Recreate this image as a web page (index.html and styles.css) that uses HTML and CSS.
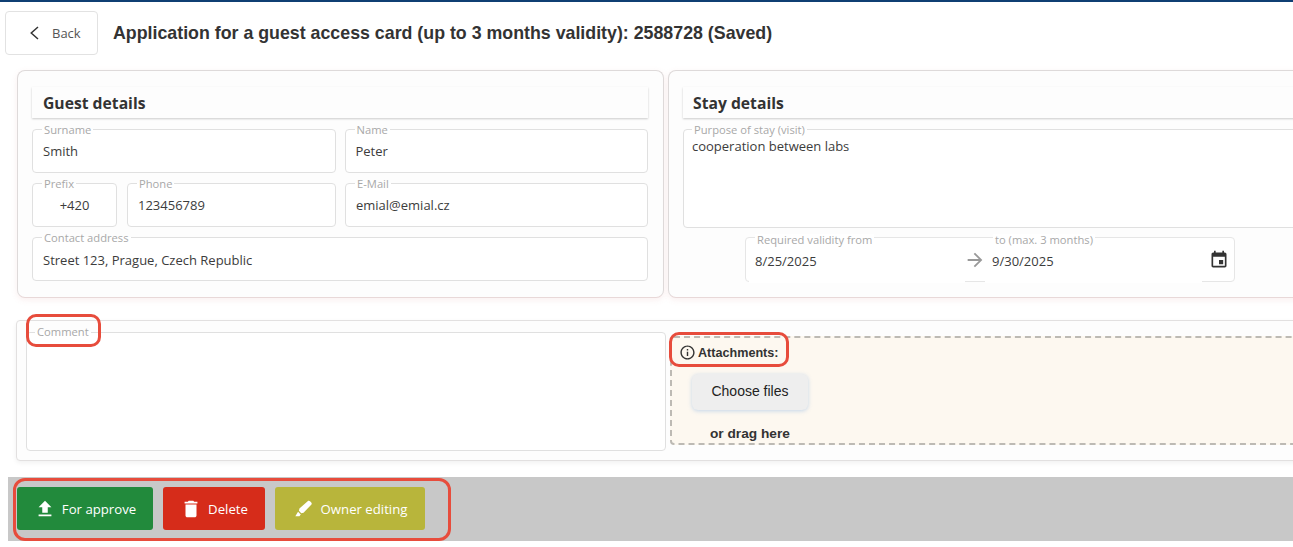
FILE: index.html
```html
<!DOCTYPE html>
<html lang="en">
<head>
  <meta charset="UTF-8">
  <meta name="viewport" content="width=device-width, initial-scale=1.0">
  <title>Guest access card</title>
  <link rel="stylesheet" href="styles.css">
</head>
<body>

  <div class="page">

    <div class="header">
      <button class="back-btn">
        <svg class="back-icon" viewBox="0 0 24 24"><path d="M16 4l-9 8 9 8" fill="none" stroke="#333" stroke-width="2"/></svg>
        Back
      </button>
      <h1>Application for a guest access card (up to 3 months validity): 2588728 (Saved)</h1>
    </div>

    <div class="cards">

      <div class="card">
        <h2>Guest details</h2>
        <div class="row">
          <fieldset class="field half"><legend>Surname</legend>Smith</fieldset>
          <fieldset class="field half"><legend>Name</legend>Peter</fieldset>
        </div>
        <div class="row">
          <div class="phone-group">
            <fieldset class="field prefix"><legend>Prefix</legend>+420</fieldset>
            <fieldset class="field phone"><legend>Phone</legend>123456789</fieldset>
          </div>
          <fieldset class="field half"><legend>E-Mail</legend>emial@emial.cz</fieldset>
        </div>
        <div class="row">
          <fieldset class="field wide"><legend>Contact address</legend>Street 123, Prague, Czech Republic</fieldset>
        </div>
      </div>

      <div class="card stay">
        <h2>Stay details</h2>
        <fieldset class="field purpose"><legend>Purpose of stay (visit)</legend>cooperation between labs</fieldset>
        <div class="dates">
          <div class="date-box">
            <span class="date-label label-from">Required validity from</span>
            <span class="date-label label-to">to (max. 3 months)</span>
            <div class="date-input date-from">8/25/2025</div>
            <svg class="arrow-icon" viewBox="0 0 24 24"><path d="M12 4l-1.41 1.41L16.17 11H4v2h12.17l-5.58 5.59L12 20l8-8z" fill="#999"/></svg>
            <div class="date-input date-to">9/30/2025</div>
            <svg class="cal-icon" viewBox="0 0 24 24"><path d="M17 12h-5v5h5v-5zM16 1v2H8V1H6v2H5c-1.11 0-1.99.9-1.99 2L3 19c0 1.1.89 2 2 2h14c1.1 0 2-.9 2-2V5c0-1.1-.9-2-2-2h-1V1h-2zm3 18H5V8h14v11z" fill="#333"/></svg>
          </div>
        </div>
      </div>

    </div>

    <div class="lower">
      <fieldset class="field comment"><legend>Comment</legend></fieldset>
      <div class="dropzone">
        <div class="attach-title">
          <svg class="info-icon" viewBox="0 0 24 24"><path d="M11 7h2v2h-2zm0 4h2v6h-2zm1-9C6.48 2 2 6.48 2 12s4.48 10 10 10 10-4.48 10-10S17.52 2 12 2zm0 18c-4.41 0-8-3.59-8-8s3.59-8 8-8 8 3.59 8 8-3.59 8-8 8z" fill="#333"/></svg>
          Attachments:
        </div>
        <button class="choose-btn">Choose files</button>
        <div class="drag-text">or drag here</div>
      </div>
    </div>

    <div class="actions">
      <button class="action green">
        <svg viewBox="0 0 24 24"><path d="M5 20h14v-2H5v2zm0-10h4v6h6v-6h4l-7-7-7 7z" fill="#fff"/></svg>
        For approve
      </button>
      <button class="action red">
        <svg viewBox="0 0 24 24"><path d="M6 19c0 1.1.9 2 2 2h8c1.100 0 2-.9 2-2V7H6v12zM19 4h-3.500l-1-1h-5l-1 1H5v2h14V4z" fill="#fff"/></svg>
        Delete
      </button>
      <button class="action olive">
        <svg viewBox="0 0 24 24"><path d="M16 3.500c.8-.7 1.900-.6 2.600.1l1.300 1.300c.7.7.7 1.800 0 2.500L11.500 16 9 16.500 6.500 14l.5-2.500zM5.500 15l3 3-1.500 2H2.500z" fill="#fff"/></svg>
        Owner editing
      </button>
    </div>

    <!-- red marks drawn over the screenshot -->
    <div class="mark mark-comment"></div>
    <div class="mark mark-attach"></div>
    <div class="mark mark-actions"></div>

  </div>

</body>
</html>
```

FILE: styles.css
```css
html, body {
  margin: 0;
  padding: 0;
  height: 100%;
  overflow: hidden;
}

body {
  font-family: "Open Sans", "Noto Sans", Arial, sans-serif;
  background: #fff;
  color: #3c3c3c;
}

.page {
  position: relative;
  width: 1293px;
  height: 547px;
  overflow: hidden;
  border-top: 2px solid #0f3f73;
  box-sizing: border-box;
}

/* header */
.header {
  display: flex;
  align-items: center;
  padding: 9px 0 0 5px;
  height: 44px;
}

.back-btn {
  display: flex;
  align-items: center;
  width: 93px;
  height: 44px;
  padding: 0 0 0 20px;
  background: #fff;
  border: 1px solid #e2e2e2;
  border-radius: 4px;
  font-family: inherit;
  font-size: 13px;
  color: #555;
}

.back-icon {
  width: 18px;
  height: 18px;
  margin-right: 8px;
}

h1 {
  margin: 0 0 0 15px;
  font-family: "Liberation Sans", Arial, sans-serif;
  font-size: 17.8px;
  font-weight: bold;
  color: #333;
}

/* cards */
.cards {
  display: flex;
  gap: 4px;
  margin: 15px 0 0 17px;
  width: 1320px;
}

.card {
  flex: 0 0 647px;
  height: 228px;
  box-sizing: border-box;
  padding: 16px 15px 0 14px;
  background: #fdfdfd;
  border: 1px solid #dedada;
  border-bottom-color: #e8d8d8;
  border-radius: 8px;
  box-shadow: 0 2px 6px rgba(210, 120, 120, 0.12);
}

h2 {
  margin: 0 0 5px;
  height: 31px;
  padding-left: 11px;
  line-height: 32px;
  font-size: 15.7px;
  font-weight: 700;
  color: #333;
  box-sizing: border-box;
  box-shadow: 0 1px 2px rgba(0, 0, 0, 0.2);
}

.stay h2 {
  padding-left: 10px;
}

.row {
  display: flex;
  gap: 9px;
  margin-bottom: 4px;
}

.field {
  margin: 0;
  padding: 6px 0 0 10px;
  min-width: 0;
  height: 50px;
  box-sizing: border-box;
  background: #fff;
  border: 1px solid #e0e0e0;
  border-radius: 4px;
  font-size: 13px;
  line-height: 20px;
  color: #3c3c3c;
}

.field legend {
  position: relative;
  top: 1px;
  margin-left: -1px;
  padding: 0 2px;
  font-size: 11.2px;
  line-height: 12px;
  color: #a8a8a8;
}

.half {
  flex: 1 1 50%;
  min-width: 0;
}

.wide {
  flex: 1;
  padding-top: 7px;
}

.phone-group {
  display: flex;
  flex: 0 0 304px;
  gap: 10px;
}

.prefix {
  flex: 0 0 85px;
  padding-right: 10px;
  text-align: center;
}

.prefix legend {
  text-align: left;
}

.phone {
  flex: 1;
  min-width: 0;
}

.purpose {
  height: 105px;
  margin-right: -30px;
  padding-top: 2px;
  padding-left: 8px;
  line-height: 18px;
}

.purpose legend {
  margin-left: 0;
}

/* date range */
.dates {
  padding: 9px 0 0 62px;
}

.date-box {
  position: relative;
  display: flex;
  align-items: center;
  width: 490px;
  height: 45px;
  box-sizing: border-box;
  background: #fff;
  border: 1px solid #e6e6e6;
  border-radius: 4px;
}

.date-label {
  position: absolute;
  top: -4px;
  padding: 0 2px;
  font-size: 11.2px;
  line-height: 12px;
  color: #a8a8a8;
  background: #fff;
}

.label-from { left: 9px; }
.label-to { left: 247px; }

/* the inputs sit over the bottom border of the box */
.date-input {
  height: 45px;
  box-sizing: border-box;
  line-height: 46px;
  font-size: 13px;
  background: #fff;
  margin-bottom: -2px;
}

.date-from {
  width: 216px;
  margin-left: 3px;
  padding-left: 6px;
}

.date-to {
  width: 217px;
  padding-left: 7px;
}

.arrow-icon {
  width: 22px;
  height: 22px;
  margin: 0 -1px;
}

.cal-icon {
  width: 20px;
  height: 20px;
  margin-left: 7px;
}

/* comment + attachments */
.lower {
  display: flex;
  gap: 4px;
  margin: 22px 0 0 16px;
  width: 1320px;
  height: 141px;
  box-sizing: border-box;
  padding: 0 0 0 9px;
  background: #fdfdfd;
  border: 1px solid #e2e0e0;
  border-radius: 4px;
  box-shadow: 0 2px 5px rgba(0, 0, 0, 0.06);
}

.comment {
  flex: 0 0 640px;
  height: 125px;
  margin-top: 5px;
  padding-left: 9px;
}

.comment legend {
  top: 0;
}

.dropzone {
  flex: 1;
  height: 109px;
  margin-top: 15px;
  box-sizing: border-box;
  padding: 6px 0 0 7px;
  background: #fdf8f0;
  border: 2px dashed #bdbab4;
  border-radius: 4px;
  font-family: "Liberation Sans", Arial, sans-serif;
}

.attach-title {
  display: flex;
  align-items: center;
  gap: 2px;
  font-size: 12.6px;
  font-weight: bold;
  color: #333;
}

.info-icon {
  width: 17px;
  height: 17px;
}

.choose-btn {
  display: block;
  width: 116px;
  height: 36px;
  margin: 13px 0 0 13px;
  padding: 0 0 2px;
  background: #eeeeee;
  border: none;
  border-radius: 6px;
  box-shadow: 0 1px 4px rgba(90, 150, 220, 0.35);
  font-family: inherit;
  font-size: 14px;
  color: #222;
}

.drag-text {
  margin: 16px 0 0 31px;
  font-size: 13.7px;
  font-weight: bold;
  color: #333;
}

/* bottom bar */
.actions {
  display: flex;
  gap: 10px;
  margin: 16px 0 0 8px;
  padding: 10px 0 0 9px;
  height: 64px;
  box-sizing: border-box;
  background: #c8c8c8;
}

.action {
  display: flex;
  align-items: center;
  justify-content: center;
  gap: 6px;
  height: 43px;
  padding: 0;
  border: none;
  border-radius: 3px;
  font-family: inherit;
  font-size: 13.2px;
  color: #fff;
}

.action svg {
  width: 22px;
  height: 22px;
}

.green { width: 136px; background: #228a3c; }
.red { width: 102px; background: #d62c1a; }
.olive { width: 150px; background: #b8b53b; }

/* annotations */
.mark {
  position: absolute;
  box-sizing: border-box;
  border: 3px solid #e74c3c;
  border-radius: 10px;
}

.mark-comment { left: 26px; top: 312px; width: 75px; height: 33px; }
.mark-attach { left: 669px; top: 330px; width: 120px; height: 35px; }
.mark-actions { left: 13px; top: 476px; width: 438px; height: 63px; border-radius: 12px; }
```
